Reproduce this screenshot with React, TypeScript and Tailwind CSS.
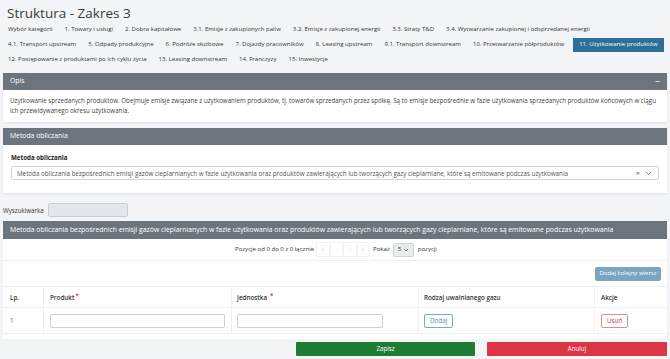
import React from "react";

const tabs = [
  "Wybór kategorii",
  "1. Towary i usługi",
  "2. Dobra kapitałowe",
  "3.1. Emisje z zakupionych paliw",
  "3.2. Emisje z zakupionej energii",
  "3.3. Straty T&D",
  "3.4. Wytwarzanie zakupionej i odsprzedanej energii",
  "4.1. Transport upstream",
  "5. Odpady produkcyjne",
  "6. Podróże służbowe",
  "7. Dojazdy pracowników",
  "8. Leasing upstream",
  "9.1. Transport downstream",
  "10. Przetwarzanie półproduktów",
  "11. Użytkowanie produktów",
  "12. Postępowanie z produktami po ich cyklu życia",
  "13. Leasing downstream",
  "14. Franczyzy",
  "15. Inwestycje",
];

const ACTIVE = "11. Użytkowanie produktów";

const methodText =
  "Metoda obliczania bezpośrednich emisji gazów cieplarnianych w fazie użytkowania oraz produktów zawierających lub tworzących gazy cieplarniane, które są emitowane podczas użytkowania";

const CardHeader: React.FC<{ title: string; minus?: boolean }> = ({ title, minus }) => (
  <div className="h-[17px] bg-[#6c757d] text-white text-[6.8px] flex items-center justify-between px-[7px]">
    <span>{title}</span>
    {minus && <span className="text-[9px] leading-none">−</span>}
  </div>
);

const App: React.FC = () => {
  return (
    <div
      className="bg-[#f3f4f7] min-h-[359px] text-[#333] pb-[40px]"
      style={{ fontFamily: '"Open Sans", "Noto Sans", sans-serif' }}
    >
      {/* Title */}
      <div className="px-[7px] pt-[3px] h-[22px] text-[13.5px] text-[#3a3a3a] leading-[20px]">
        Struktura - Zakres 3
      </div>

      {/* Tabs */}
      <div className="flex flex-wrap pl-[2px] pr-[6px] gap-y-[1px] mt-[1px]">
        {tabs.map((t) => (
          <div
            key={t}
            className={`h-[14px] px-[6px] flex items-center text-[6.05px] whitespace-nowrap ${
              t === ACTIVE ? "bg-[#2c6f97] text-white ml-[3px]" : "text-[#333]"
            }`}
          >
            {t}
          </div>
        ))}
      </div>

      {/* Opis */}
      <div className="mx-[3px] mt-[6px] bg-white shadow-[0_1px_2px_rgba(0,0,0,0.08)]">
        <CardHeader title="Opis" minus />
        <div className="px-[7px] pt-[6px] pb-[6px] text-[6.2px] leading-[10px] text-[#444]">
          Użytkowanie sprzedanych produktów. Obejmuje emisje związane z użytkowaniem produktów, tj. towarów
          sprzedanych przez spółkę. Są to emisje bezpośrednie w fazie użytkowania sprzedanych produktów końcowych w
          ciągu ich przewidywanego okresu użytkowania.
        </div>
      </div>

      {/* Metoda obliczania */}
      <div className="mx-[3px] mt-[6px] bg-white shadow-[0_1px_2px_rgba(0,0,0,0.08)]">
        <CardHeader title="Metoda obliczania" />
        <div className="px-[8px] pt-[8px] pb-[13px]">
          <div className="text-[6.2px] font-bold text-[#222] mb-[4px]">Metoda obliczania</div>
          <div className="h-[14px] border border-[#ced4da] rounded-[2px] flex items-center px-[5px] text-[6.25px] text-[#555]">
            <span className="flex-1 truncate">{methodText}</span>
            <span className="text-[8px] text-[#666] mr-[5px] leading-none">×</span>
            <svg width="7" height="5" viewBox="0 0 7 5" className="mr-[1px]">
              <path d="M1 1l2.5 2.5L6 1" stroke="#666" strokeWidth="0.8" fill="none" />
            </svg>
          </div>
        </div>
      </div>

      {/* Wyszukiwarka */}
      <div className="flex items-center mt-[10px] px-[3px] gap-[4px]">
        <span className="text-[6.2px] text-[#333]">Wyszukiwarka</span>
        <div className="w-[80px] min-w-[80px] shrink-0 h-[14px] bg-[#e3e6ea] border border-[#c8cdd3] rounded-[2px]" />
      </div>

      {/* Table card */}
      <div className="mx-[3px] mt-[4px] bg-white">
        <div className="h-[18px] bg-[#6c757d] text-white text-[6.85px] flex items-center px-[7px]">
          {methodText}
        </div>
        <div className="h-[22px] flex items-center pl-[232px] border-b border-[#eef0f2] text-[6.05px] text-[#333]">
          <span className="mr-[2px]">Pozycje od 0 do 0 z 0 łącznie</span>
          <div className="flex">
            {["«", "‹", "›", "»"].map((c) => (
              <div
                key={c}
                className="w-[13.5px] h-[15px] border border-[#f1f2f4] flex items-center justify-center text-[#ddd] text-[6px]"
              >
                {c}
              </div>
            ))}
          </div>
          <span className="ml-[3px]">Pokaż</span>
          <div className="ml-[3px] w-[21px] h-[14px] bg-[#e9ecef] border border-[#ced4da] rounded-[2px] flex items-center justify-between px-[4px]">
            <span>5</span>
            <svg width="6" height="4" viewBox="0 0 6 4">
              <path d="M1 1l2 2 2-2" stroke="#555" strokeWidth="0.7" fill="none" />
            </svg>
          </div>
          <span className="ml-[4px]">pozycji</span>
        </div>
        <div className="h-[26px] flex items-center justify-end pr-[6px] border-b border-[#eef0f2]">
          <div className="h-[14px] w-[66px] bg-[#7ba6c2] text-white text-[6px] rounded-[2px] flex items-center justify-center">
            Dodaj kolejny wiersz
          </div>
        </div>
        <div className="grid grid-cols-[41px_188px_187px_176px_1fr] text-[6.3px]">
          <div className="h-[21px] flex items-center pl-[7px] font-semibold border-b border-r border-[#eef0f2]">Lp.</div>
          <div className="h-[21px] flex items-center pl-[6px] font-semibold border-b border-r border-[#eef0f2]">
            Produkt<span className="text-[#dc3545] ml-[1px] -mt-[3px]">*</span>
          </div>
          <div className="h-[21px] flex items-center pl-[5px] font-semibold border-b border-r border-[#eef0f2]">
            Jednostka<span className="text-[#dc3545] ml-[3px] -mt-[3px]">*</span>
          </div>
          <div className="h-[21px] flex items-center pl-[5px] font-semibold border-b border-r border-[#eef0f2]">
            Rodzaj uwalnianego gazu
          </div>
          <div className="h-[21px] flex items-center pl-[6px] font-semibold border-b border-[#eef0f2]">Akcje</div>

          <div className="h-[26px] flex items-center pl-[7px] border-b border-r border-[#eef0f2] text-[#555]">1</div>
          <div className="h-[26px] flex items-center pl-[6px] pr-[6px] border-b border-r border-[#eef0f2]">
            <div className="w-full h-[14px] border border-[#c9d0d8] rounded-[2px]" />
          </div>
          <div className="h-[26px] flex items-center pl-[5px] pr-[35px] border-b border-r border-[#eef0f2]">
            <div className="w-full h-[14px] border border-[#c9d0d8] rounded-[2px]" />
          </div>
          <div className="h-[26px] flex items-center pl-[5px] border-b border-r border-[#eef0f2]">
            <div className="h-[14px] px-[5px] border border-[#7ba6c2] text-[#5b8fb0] rounded-[2px] flex items-center">
              Dodaj
            </div>
          </div>
          <div className="h-[26px] flex items-center pl-[6px] border-b border-[#eef0f2]">
            <div className="h-[14px] px-[5px] border border-[#e58a93] text-[#dc3545] rounded-[2px] flex items-center">
              Usuń
            </div>
          </div>
        </div>
        <div className="h-[14px] flex justify-end pr-[6px] pt-[6px]">
          <div className="w-[66px] h-[14px] bg-[#7ba6c2] rounded-[2px]" />
        </div>
      </div>

      {/* Footer */}
      <div className="fixed left-0 right-0 bottom-0 h-[20px] bg-[#f3f4f7] flex items-center justify-end gap-[12px] pr-[3px]">
        <div className="w-[179px] h-[14px] bg-[#1e7b34] text-white text-[6.2px] flex items-center justify-center rounded-[1px]">
          Zapisz
        </div>
        <div className="w-[180px] h-[14px] bg-[#dc3545] text-white text-[6.2px] flex items-center justify-center rounded-[1px]">
          Anuluj
        </div>
      </div>
    </div>
  );
};

export default App;
